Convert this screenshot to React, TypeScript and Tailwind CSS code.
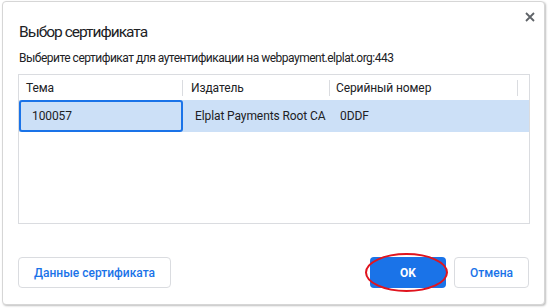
import React from "react";

export default function App() {
  return (
    <div className="w-[549px] h-[308px] bg-white" style={{ fontFamily: 'Roboto, "Noto Sans", sans-serif' }}>
      <div className="relative ml-[2px] mt-[1px] w-[543px] h-[304px] rounded-[4px] border border-[#d6d6d6] bg-white shadow-[1px_1px_2px_rgba(0,0,0,0.25)] flex flex-col">
        <svg className="absolute right-[9px] top-[10px]" width="10" height="10" viewBox="0 0 10 10">
          <path d="M1 1L9 9M9 1L1 9" stroke="#5f6368" strokeWidth="1.8" />
        </svg>
        <div className="pl-[16px] pt-[20px] text-[15.5px] leading-[20px] tracking-[-1px] text-[#202124]">Выбор сертификата</div>
        <div className="pl-[16px] pt-[8px] text-[12px] leading-[16px] tracking-[-0.5px] text-[#202124]">
          Выберите сертификат для аутентификации на webpayment.elplat.org:443
        </div>
        <div className="ml-[15px] mt-[8px] w-[512px] h-[150px] border border-[#dadce0] text-[12px] tracking-[-0.1px] text-[#202124] whitespace-nowrap">
          <div className="flex h-[25px] items-center">
            <div className="w-[164px] h-[16px] flex items-center pl-[7px] border-r border-[#dadce0]">Тема</div>
            <div className="w-[147px] h-[16px] flex items-center pl-[8px] border-r border-[#dadce0]">Издатель</div>
            <div className="w-[188px] h-[16px] flex items-center pl-[6px] border-r border-[#dadce0]">Серийный номер</div>
          </div>
          <div className="flex h-[32px] bg-[#cce0f7]">
            <div className="w-[164px] h-full flex items-center pl-[11px] border-2 border-[#1a73e8] rounded-[3px]">100057</div>
            <div className="w-[147px] h-full flex items-center pl-[12px]">Elplat Payments Root CA</div>
            <div className="flex-1 h-full flex items-center pl-[10px]">0DDF</div>
          </div>
        </div>
        <div className="flex-1" />
        <div className="flex items-center px-[15px] pb-[16px]">
          <button className="w-[153px] h-[31px] rounded-[4px] border border-[#dadce0] text-[12px] font-medium text-[#1a73e8] bg-white">
            Данные сертификата
          </button>
          <div className="flex-1" />
          <div className="relative">
            <button className="w-[76px] h-[31px] rounded-[4px] bg-[#1a73e8] text-white text-[12px] font-bold">OK</button>
            <div className="absolute left-[-5px] top-[-4px] w-[83px] h-[39px] rounded-[50%] border-[2px] border-[#e0141e] pointer-events-none" />
          </div>
          <button className="ml-[8px] w-[75px] h-[31px] rounded-[4px] border border-[#dadce0] text-[12px] font-medium text-[#1a73e8] bg-white">
            Отмена
          </button>
        </div>
      </div>
    </div>
  );
}
